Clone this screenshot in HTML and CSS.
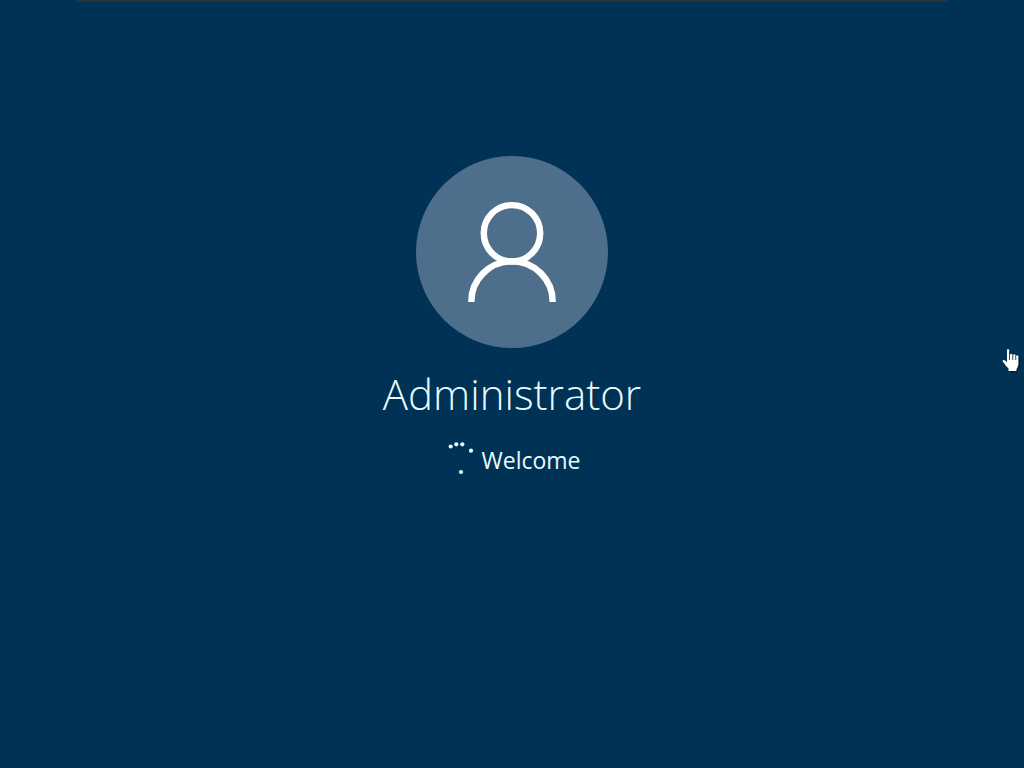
FILE: index.html
```html
<!DOCTYPE html>
<html lang="en">
<head>
    <meta charset="UTF-8">
    <meta name="viewport" content="width=device-width, initial-scale=1.0">
    <title>Welcome</title>
    <link rel="stylesheet" href="styles.css">
</head>
<body>

    <div class="top-edge"></div>

    <main class="sign-in">
        <svg class="avatar" viewBox="0 0 192 192" aria-hidden="true">
            <circle class="avatar-bg" cx="96" cy="96" r="96"/>
            <circle class="avatar-line" cx="96" cy="77.3" r="28.2"/>
            <path class="avatar-line" d="M55.3 146V145.7A40.7 40.4 0 0 1 136.7 145.7V146"/>
        </svg>

        <h1 class="user-name">Administrator</h1>

        <div class="status">
            <svg class="spinner" viewBox="0 0 32 36" aria-hidden="true">
                <circle cx="7.7" cy="4.5" r="2.1"/>
                <circle cx="13.3" cy="2.3" r="2.1"/>
                <circle cx="19.3" cy="2.3" r="2.1"/>
                <circle cx="28" cy="8.7" r="2.1"/>
                <circle cx="18" cy="30" r="2.1"/>
            </svg>
            <p class="status-text">Welcome</p>
        </div>
    </main>

    <svg class="pointer" viewBox="0 0 20 26" aria-hidden="true">
        <path class="pointer-shadow" d="M7 3H9V8H18V18L16 21V24.5H8V22L3 16V14L7 16Z"/>
        <path class="pointer-hand" d="M5 2Q6 .2 7.2 2V12H8V6.5Q9.2 5 10.4 6.5V12H11.2V6.8Q12.4 5.5 13.4 6.8V12H14.2V7.7Q15.4 6.6 16.4 8V16.5Q16 19.5 14.5 21V23H6.5V20.5Q4 18.5 2.3 15.5L.4 13Q1.5 11.3 3.3 12.7L5 14.3Z"/>
    </svg>

</body>
</html>
```
FILE: styles.css
```css
* {
    box-sizing: border-box;
}

body {
    margin: 0;
    min-height: 100vh;
    background: #003256;
    color: #e6fbff;
    font-family: "Open Sans", "Noto Sans", sans-serif;
    overflow: hidden;
}

/* Dark strip along the top of the screen */
.top-edge {
    width: 85%;
    height: 2px;
    margin: 0 auto;
    background: #2c333d;
}

.sign-in {
    display: flex;
    flex-direction: column;
    align-items: center;
    padding-top: 154px;
}

/* User picture */
.avatar {
    width: 192px;
    height: 192px;
}

.avatar-bg {
    fill: #4d6f8b;
}

.avatar-line {
    fill: none;
    stroke: #fff;
    stroke-width: 6.4;
}

.user-name {
    margin: 16px 0 0;
    font-size: 42px;
    font-weight: 300;
    line-height: 60px;
}

/* Spinner and message */
.status {
    display: flex;
    align-items: center;
    gap: 6px;
    margin-top: 18px;
}

.spinner {
    width: 32px;
    height: 36px;
    fill: #e6fbff;
}

.status-text {
    margin: 0;
    font-size: 23px;
    line-height: 34px;
}

/* Mouse pointer */
.pointer {
    position: absolute;
    top: 348px;
    right: 2px;
    width: 20px;
    height: 26px;
}

.pointer-shadow {
    fill: #001d38;
}

.pointer-hand {
    fill: #fff;
}
```
